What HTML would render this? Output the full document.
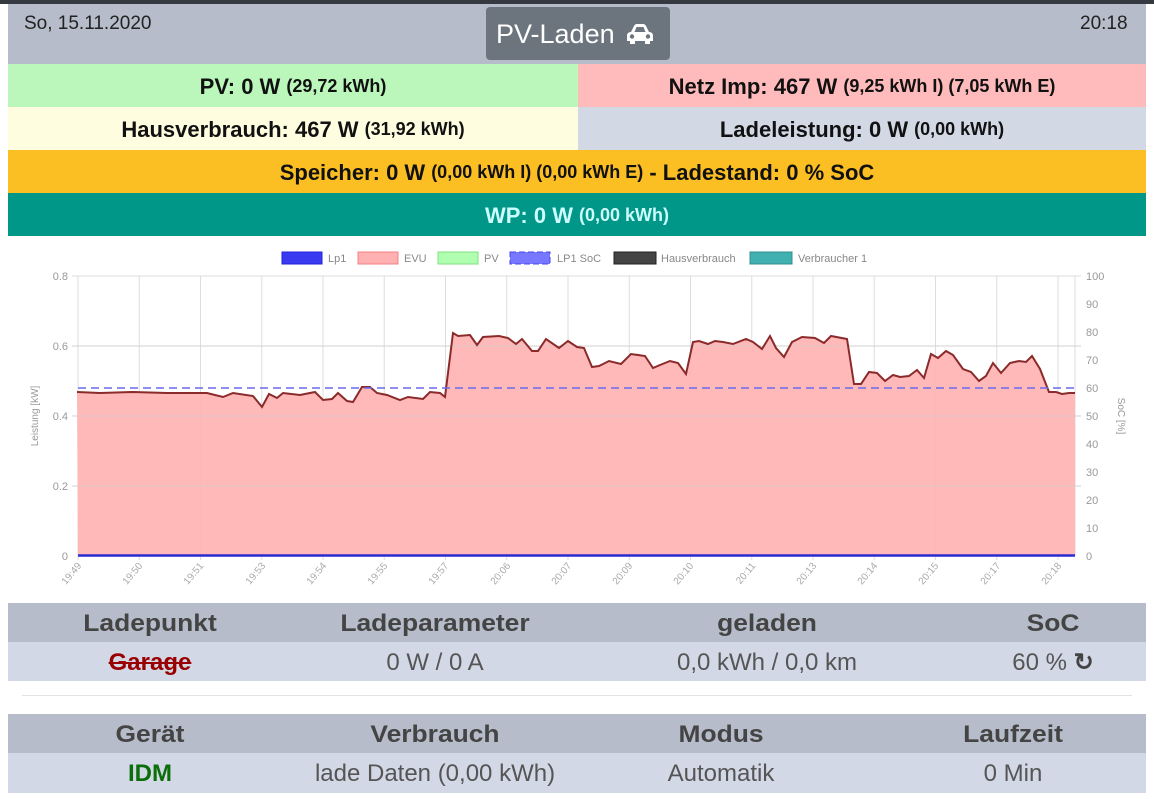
<!DOCTYPE html>
<html><head><meta charset="utf-8">
<style>
*{box-sizing:border-box;margin:0;padding:0}
body{width:1154px;height:799px;background:#fff;font-family:"Liberation Sans",sans-serif;position:relative;overflow:hidden}
.abs{position:absolute}
.row{position:absolute;display:flex;align-items:center;justify-content:center;font-weight:bold;font-size:22px;color:#111;padding-top:2px}
.row small{font-size:18px;margin-left:6px}
.tbl{position:absolute;left:8px;width:1138px}
.tr{position:absolute;left:0;width:1138px;height:39px}
.td{position:absolute;top:0;height:39px;line-height:41px;transform:translateX(-50%);white-space:nowrap;font-size:24px;color:#555}
.th .td{font-weight:bold;font-size:24px;color:#444;transform:translateX(-50%) scaleX(1.1)}
</style></head><body>
<div class="abs" style="left:0;top:0;width:1154px;height:4px;background:#343a40"></div>
<div class="abs" style="left:8px;top:4px;width:1138px;height:60px;background:#b6bcc9"></div>
<div class="abs" style="left:24px;top:13px;font-size:19px;color:#222">So, 15.11.2020</div>
<div class="abs" style="left:1080px;top:13px;font-size:19px;color:#222">20:18</div>
<div class="abs" style="left:486px;top:7px;width:184px;height:53px;background:#6c757d;border-radius:4px;color:#fff;font-size:27px;line-height:55px;padding-left:10px">PV-Laden
<svg class="abs" style="left:139px;top:17px" width="30" height="21" viewBox="0 0 30 21"><path d="M6 8 L9 2 Q10 0 12 0 H18 Q20 0 21 2 L24 8 Q28 8 28 12 V17 H25 V20 H20 V17 H10 V20 H5 V17 H2 V12 Q2 8 6 8Z M9.5 8 H20.5 L18.5 3 H11.5Z" fill="#fff" fill-rule="evenodd"/><circle cx="7" cy="12.5" r="2.2" fill="#6c757d"/><circle cx="23" cy="12.5" r="2.2" fill="#6c757d"/></svg></div>

<div class="row" style="left:8px;top:64px;width:570px;height:43px;background:#bbf7bb">PV: 0 W<small>(29,72 kWh)</small></div>
<div class="row" style="left:578px;top:64px;width:568px;height:43px;background:#ffbbbb">Netz Imp: 467 W<small>(9,25 kWh I) (7,05 kWh E)</small></div>
<div class="row" style="left:8px;top:107px;width:570px;height:43px;background:#fffde0">Hausverbrauch: 467 W<small>(31,92 kWh)</small></div>
<div class="row" style="left:578px;top:107px;width:568px;height:43px;background:#d3d8e5">Ladeleistung: 0 W<small>(0,00 kWh)</small></div>
<div class="row" style="left:8px;top:150px;width:1138px;height:43px;background:#fbbf24">Speicher: 0 W<small>(0,00 kWh I) (0,00 kWh E)</small>&nbsp;- Ladestand: 0 % SoC</div>
<div class="row" style="left:8px;top:193px;width:1138px;height:43px;background:#009688;color:#ccfcfc">WP: 0 W<small>(0,00 kWh)</small></div>

<svg class="abs" style="left:0;top:236px" width="1154" height="366" viewBox="0 236 1154 366" font-family="Liberation Sans,sans-serif">
<g font-size="11" fill="#888">
<rect x="282" y="252" width="40" height="12" fill="#3a3af0" stroke="#2222dd"/><text x="328" y="262">Lp1</text>
<rect x="358" y="252" width="40" height="12" fill="#ffb0b0" stroke="#f08080"/><text x="404" y="262">EVU</text>
<rect x="438" y="252" width="40" height="12" fill="#b0ffb0" stroke="#80e080"/><text x="484" y="262">PV</text>
<rect x="510" y="252" width="40" height="12" fill="#7777ff" stroke="#4444ee" stroke-dasharray="6 3"/><text x="557" y="262">LP1 SoC</text>
<rect x="614" y="252" width="42" height="12" fill="#444" stroke="#222"/><text x="661" y="262">Hausverbrauch</text>
<rect x="750" y="252" width="42" height="12" fill="#40b0b0" stroke="#309090"/><text x="798" y="262">Verbraucher 1</text>
</g>
<g stroke="#ddd" stroke-width="1">
<line x1="72" y1="276" x2="1081" y2="276"/><line x1="72" y1="346" x2="1081" y2="346"/><line x1="72" y1="416" x2="1081" y2="416"/><line x1="72" y1="486" x2="1081" y2="486"/>
<line x1="78" y1="276" x2="78" y2="560"/><line x1="139.25" y1="276" x2="139.25" y2="560"/><line x1="200.5" y1="276" x2="200.5" y2="560"/><line x1="261.75" y1="276" x2="261.75" y2="560"/><line x1="323" y1="276" x2="323" y2="560"/><line x1="384.25" y1="276" x2="384.25" y2="560"/><line x1="445.5" y1="276" x2="445.5" y2="560"/><line x1="506.75" y1="276" x2="506.75" y2="560"/><line x1="568" y1="276" x2="568" y2="560"/><line x1="629.25" y1="276" x2="629.25" y2="560"/><line x1="690.5" y1="276" x2="690.5" y2="560"/><line x1="751.75" y1="276" x2="751.75" y2="560"/><line x1="813" y1="276" x2="813" y2="560"/><line x1="874.25" y1="276" x2="874.25" y2="560"/><line x1="935.5" y1="276" x2="935.5" y2="560"/><line x1="996.75" y1="276" x2="996.75" y2="560"/><line x1="1058" y1="276" x2="1058" y2="560"/><line x1="1075" y1="276" x2="1075" y2="556"/>
</g>
<polygon fill="#ffb3b3" fill-opacity="0.92" points="78,556 77,392 100,393 133,392 167,393 207,393 223,397 233,393 253,396 262,407 269,394 277,398 283,393 300,395 315,392 323,400 332,399 338,393 347,401 353,402 362,387 370,387 377,393 387,395 400,400 408,397 423,399 430,392 440,393 445,397 453,333 458,336 470,335 477,345 483,337 499,336 508,338 516,344 522,339 532,351 538,351 546,339 559,348 568,341 577,347 584,348 592,367 599,366 609,361 621,364 631,354 645,356 653,368 660,365 670,361 678,363 686,374 693,342 699,341 708,344 715,341 723,342 733,344 746,339 753,342 762,349 770,336 776,348 784,357 792,342 802,337 815,338 824,343 831,336 847,339 854,384 861,384 869,372 877,373 885,381 893,375 900,377 909,376 917,370 924,378 931,354 938,358 946,351 953,355 963,369 971,372 979,381 986,376 993,363 1001,373 1010,363 1019,361 1026,362 1032,356 1040,369 1049,392 1056,392 1062,394 1069,393 1075,393 1075,556"/>
<g stroke="#ccc" stroke-width="1" opacity="0.6">
<line x1="72" y1="346" x2="1081" y2="346"/><line x1="72" y1="416" x2="1081" y2="416"/><line x1="72" y1="486" x2="1081" y2="486"/>
</g>
<polyline fill="none" stroke="#8b2a2a" stroke-width="2" points="77,392 100,393 133,392 167,393 207,393 223,397 233,393 253,396 262,407 269,394 277,398 283,393 300,395 315,392 323,400 332,399 338,393 347,401 353,402 362,387 370,387 377,393 387,395 400,400 408,397 423,399 430,392 440,393 445,397 453,333 458,336 470,335 477,345 483,337 499,336 508,338 516,344 522,339 532,351 538,351 546,339 559,348 568,341 577,347 584,348 592,367 599,366 609,361 621,364 631,354 645,356 653,368 660,365 670,361 678,363 686,374 693,342 699,341 708,344 715,341 723,342 733,344 746,339 753,342 762,349 770,336 776,348 784,357 792,342 802,337 815,338 824,343 831,336 847,339 854,384 861,384 869,372 877,373 885,381 893,375 900,377 909,376 917,370 924,378 931,354 938,358 946,351 953,355 963,369 971,372 979,381 986,376 993,363 1001,373 1010,363 1019,361 1026,362 1032,356 1040,369 1049,392 1056,392 1062,394 1069,393 1075,393"/>
<line x1="78" y1="388" x2="1075" y2="388" stroke="#6a6aee" stroke-width="1.5" stroke-dasharray="8 5"/>
<line x1="78" y1="555.5" x2="1075" y2="555.5" stroke="#2b2bd0" stroke-width="2.5"/>
<g font-size="11" fill="#999" text-anchor="end">
<text x="68" y="280">0.8</text><text x="68" y="350">0.6</text><text x="68" y="420">0.4</text><text x="68" y="490">0.2</text><text x="68" y="560">0</text>
</g>
<g font-size="11" fill="#999">
<text x="1086" y="280">100</text><text x="1086" y="308">90</text><text x="1086" y="336">80</text><text x="1086" y="364">70</text><text x="1086" y="392">60</text><text x="1086" y="420">50</text><text x="1086" y="448">40</text><text x="1086" y="476">30</text><text x="1086" y="504">20</text><text x="1086" y="532">10</text><text x="1086" y="560">0</text>
</g>
<text transform="translate(38,416) rotate(-90)" font-size="10" fill="#999" text-anchor="middle">Leistung [kW]</text>
<text transform="translate(1118,416) rotate(90)" font-size="10" fill="#999" text-anchor="middle">SoC [%]</text>
<g font-size="10" fill="#aaa" text-anchor="end">
<text transform="translate(82,566) rotate(-50)">19:49</text><text transform="translate(143,566) rotate(-50)">19:50</text><text transform="translate(204,566) rotate(-50)">19:51</text><text transform="translate(266,566) rotate(-50)">19:53</text><text transform="translate(327,566) rotate(-50)">19:54</text><text transform="translate(388,566) rotate(-50)">19:55</text><text transform="translate(449,566) rotate(-50)">19:57</text><text transform="translate(511,566) rotate(-50)">20:06</text><text transform="translate(572,566) rotate(-50)">20:07</text><text transform="translate(633,566) rotate(-50)">20:09</text><text transform="translate(694,566) rotate(-50)">20:10</text><text transform="translate(756,566) rotate(-50)">20:11</text><text transform="translate(817,566) rotate(-50)">20:13</text><text transform="translate(878,566) rotate(-50)">20:14</text><text transform="translate(939,566) rotate(-50)">20:15</text><text transform="translate(1001,566) rotate(-50)">20:17</text><text transform="translate(1062,566) rotate(-50)">20:18</text>
</g>
</svg>

<div class="tbl" style="top:603px;height:77px">
<div class="tr th" style="top:0;background:#b6bcc9">
<div class="td" style="left:142px">Ladepunkt</div><div class="td" style="left:427px">Ladeparameter</div><div class="td" style="left:759px">geladen</div><div class="td" style="left:1045px">SoC</div></div>
<div class="tr" style="top:39px;background:#d3d8e6">
<div class="td" style="left:142px;color:#990000;font-weight:bold;text-decoration:line-through">Garage</div><div class="td" style="left:427px">0 W / 0 A</div><div class="td" style="left:759px">0,0 kWh / 0,0 km</div><div class="td" style="left:1045px">60 % <b style="color:#444">&#8635;</b></div></div>
</div>
<div class="abs" style="left:22px;top:695px;width:1110px;height:1px;background:#e3e3e3"></div>
<div class="tbl" style="top:714px;height:79px">
<div class="tr th" style="top:0;background:#b6bcc9">
<div class="td" style="left:142px">Gerät</div><div class="td" style="left:427px">Verbrauch</div><div class="td" style="left:713px">Modus</div><div class="td" style="left:1005px">Laufzeit</div></div>
<div class="tr" style="top:39px;height:40px;background:#d3d8e6">
<div class="td" style="left:142px;color:#0a6e0a;font-weight:bold">IDM</div><div class="td" style="left:427px">lade Daten (0,00 kWh)</div><div class="td" style="left:713px">Automatik</div><div class="td" style="left:1005px">0 Min</div></div>
</div>
</body></html>
